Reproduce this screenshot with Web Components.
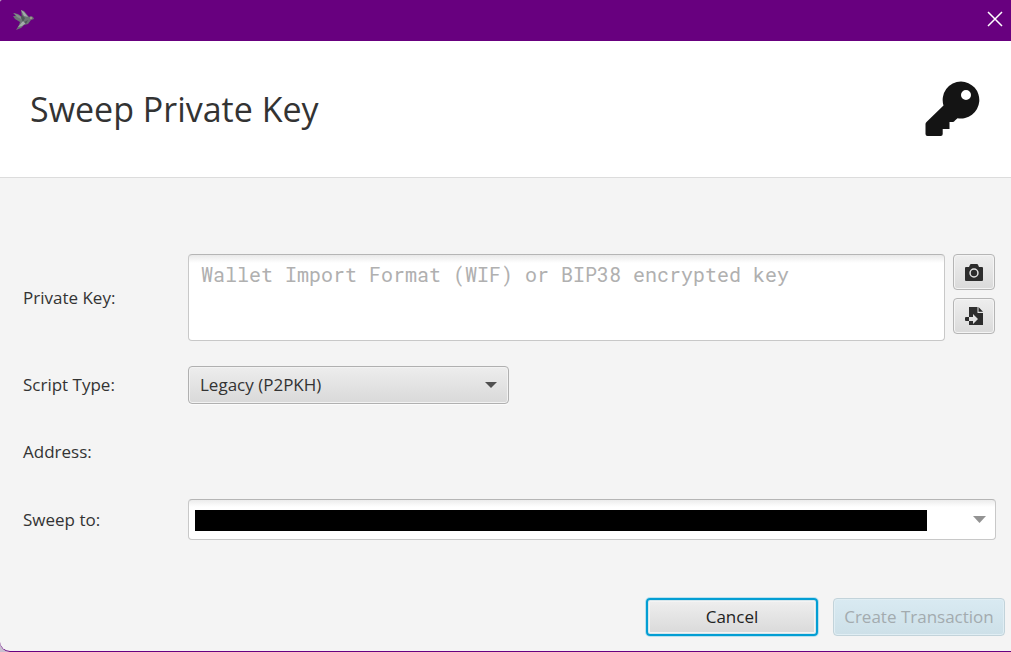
<!DOCTYPE html>
<html lang="en">
<head>
<meta charset="utf-8">
<title>Sweep Private Key</title>
<style>
  body {
    margin: 0;
    background: #c9bfd0;
    font-family: "Segoe UI", "Open Sans", "Noto Sans", sans-serif;
    font-size: 17px;
    line-height: 24px;
    color: #333;
  }
</style>
</head>
<body>
<sweep-dialog></sweep-dialog>

<script>
class TitleBar extends HTMLElement {
  constructor() {
    super();
    this.attachShadow({ mode: "open" });
    this.shadowRoot.innerHTML = `
      <style>
        :host {
          display: flex;
          align-items: center;
          justify-content: space-between;
          height: 41px;
          padding: 0 8px 4px 12px;
          box-sizing: border-box;
          background: #68007f;
        }
        svg { display: block; }
        button {
          padding: 0;
          border: 0;
          background: none;
          color: #fff;
        }
      </style>
      <svg width="22" height="22" viewBox="0 0 22 22" aria-hidden="true">
        <path fill="#6d7476" d="M1 5l5 1 4 3-1-7 3 1 5 6 2-1 2 1 1 2-3 1-3 4-4 1-3 3-5 2 3-5 1-3-5-3-2-3 3 0z"/>
        <path fill="#a3aaab" d="M9 2l3 2 4 5-4-1zM6 19l5-6 3 2-4 3z"/>
        <path fill="#858e8e" d="M2 5l6 3 3 4-6-3z"/>
        <path fill="#4e5858" d="M10 7l3 3-2 4-2-4zM12 14l4-2-2 4z"/>
        <circle cx="19" cy="10" r="1" fill="#b09b93"/>
      </svg>
      <button type="button" aria-label="Close">
        <svg width="16" height="16" viewBox="0 0 16 16" fill="none" stroke="currentColor" stroke-width="1.5">
          <path d="M1 1l14 14M15 1L1 15"/>
        </svg>
      </button>
    `;
  }
}

class DialogHeader extends HTMLElement {
  constructor() {
    super();
    this.attachShadow({ mode: "open" });
    this.shadowRoot.innerHTML = `
      <style>
        :host {
          display: flex;
          align-items: center;
          justify-content: space-between;
          height: 136px;
          padding: 0 30px;
          background: #fff;
          border-bottom: 1px solid #dcdcdc;
        }
        h1 {
          margin: 0;
          font-size: 34px;
          line-height: 48px;
          font-weight: 400;
        }
      </style>
      <h1><slot></slot></h1>
      <slot name="icon"></slot>
    `;
  }
}

class FormRow extends HTMLElement {
  constructor() {
    super();
    this.attachShadow({ mode: "open" });
    this.shadowRoot.innerHTML = `
      <style>
        :host {
          display: grid;
          grid-template-columns: 165px 1fr;
          align-items: center;
        }
        .content {
          display: flex;
          align-items: flex-start;
          gap: 8px;
          min-width: 0;
        }
      </style>
      <slot name="label"></slot>
      <div class="content"><slot></slot></div>
    `;
  }
}

class IconButton extends HTMLElement {
  constructor() {
    super();
    this.attachShadow({ mode: "open" });
    this.shadowRoot.innerHTML = `
      <style>
        :host { display: block; }
        button {
          display: flex;
          align-items: center;
          justify-content: center;
          width: 42px;
          height: 36px;
          padding: 0;
          border: 1px solid #b5b5b5;
          border-radius: 4px;
          background: linear-gradient(#eee, #dadada);
          box-shadow: inset 0 0 0 1px #f4f4f4;
          color: #2d2d2d;
        }
      </style>
      <button type="button" aria-label="${this.getAttribute("label") || ""}"><slot></slot></button>
    `;
  }
}

class DialogButton extends HTMLElement {
  constructor() {
    super();
    this.attachShadow({ mode: "open" });
    this.shadowRoot.innerHTML = `
      <style>
        :host { display: block; }
        button {
          width: 172px;
          height: 38px;
          padding: 0;
          border: 1px solid #b5b5b5;
          border-radius: 4px;
          background: linear-gradient(#efefef, #d9d9d9);
          font: inherit;
          color: #222;
          white-space: nowrap;
        }
        :host([focused]) button {
          border: 2px solid #039ed3;
          box-shadow: 0 0 0 1px #b9e1ef, inset 0 0 0 1px #d5e6ec, inset 0 0 0 2px #f4f4f4;
        }
        button:disabled {
          border-color: #c2d3da;
          background: linear-gradient(#d9eaf2, #cde0e8);
          box-shadow: inset 0 0 0 1px #e0eef4;
          color: #a3abaf;
        }
      </style>
      <button type="button" ${this.hasAttribute("disabled") ? "disabled" : ""}><slot></slot></button>
    `;
  }
}

class SweepForm extends HTMLElement {
  constructor() {
    super();
    this.attachShadow({ mode: "open" });
    this.shadowRoot.innerHTML = `
      <style>
        :host {
          display: flex;
          flex-direction: column;
          gap: 25px;
          padding: 76px 15px 0 23px;
        }
        textarea, select {
          box-sizing: border-box;
          margin: 0;
          border: 1px solid #b9b9b9;
          border-radius: 4px;
          color: #333;
        }
        textarea {
          flex: 1;
          min-width: 0;
          height: 87px;
          padding: 7px 12px;
          resize: none;
          border-color: #b5b5b5 #c8c8c8 #c8c8c8;
          background: linear-gradient(#e9e9e9, #fff 8px);
          font-family: "Roboto Mono", "Liberation Mono", monospace;
          font-size: 20px;
          line-height: 24px;
        }
        textarea::placeholder { color: #b0b0b0; opacity: 1; }
        select {
          appearance: none;
          font: inherit;
          background-repeat: no-repeat;
        }
        .tools {
          display: flex;
          flex-direction: column;
          gap: 8px;
          padding-right: 1px;
        }
        #script-type {
          width: 321px;
          height: 38px;
          padding: 0 40px 0 11px;
          border-color: #b0b0b0;
          background-image:
            url('data:image/svg+xml,<svg xmlns="http://www.w3.org/2000/svg" width="12" height="6"><path fill="%23505050" d="M0 0h12L6 6z"/></svg>'),
            linear-gradient(#ededed, #d9d9d9);
          background-position: right 11px center, 0 0;
          box-shadow: inset 0 0 0 1px #f2f2f2, 0 1px 0 #fbfbfb;
        }
        /* the chosen wallet is masked by a solid bar */
        #sweep-to {
          width: 100%;
          height: 41px;
          border-color: #b5b5b5 #c8c8c8 #c8c8c8;
          background-image:
            linear-gradient(#000, #000),
            url('data:image/svg+xml,<svg xmlns="http://www.w3.org/2000/svg" width="13" height="7"><path fill="%23939393" d="M0 0h13L6.5 7z"/></svg>'),
            linear-gradient(#ececec, #fff 7px);
          background-size: calc(100% - 74px) 21px, auto, auto;
          background-position: 6px 10px, right 9px center, 0 0;
        }
        .address { min-height: 45px; }
      </style>
      <form-row>
        <label slot="label" for="private-key">Private Key:</label>
        <textarea id="private-key" placeholder="Wallet Import Format (WIF) or BIP38 encrypted key"></textarea>
        <div class="tools">
          <icon-button label="Scan QR code">
            <svg width="20" height="20" viewBox="0 0 20 20">
              <path fill="currentColor" fill-rule="evenodd" d="M2 5h3l1-2.200Q6.300 2 7 2h6q.7 0 1 .8L15 5h3q1 0 1 1v12q0 1-1 1H2q-1 0-1-1V6q0-1 1-1zM10 6.300a4.700 4.700 0 1 0 0 9.400a4.700 4.700 0 1 0 0-9.400zM10 7.800a3.200 3.200 0 1 1 0 6.400a3.200 3.200 0 1 1 0-6.400z"/>
            </svg>
          </icon-button>
          <icon-button label="Import from file">
            <svg width="20" height="20" viewBox="0 0 20 20">
              <path fill="currentColor" d="M5 1h8.500v6H19v12H5v-4h4v3l5-5-5-5v3H5zM14.500 1L19 5.800h-4.500zM2 11h3v4H2q-1 0-1-1v-2q0-1 1-1z"/>
            </svg>
          </icon-button>
        </div>
      </form-row>
      <form-row>
        <label slot="label" for="script-type">Script Type:</label>
        <select id="script-type"><option>Legacy (P2PKH)</option></select>
      </form-row>
      <form-row class="address">
        <label slot="label" for="address">Address:</label>
        <output id="address"></output>
      </form-row>
      <form-row>
        <label slot="label" for="sweep-to">Sweep to:</label>
        <select id="sweep-to"><option></option></select>
      </form-row>
    `;
  }
}

class SweepDialog extends HTMLElement {
  constructor() {
    super();
    this.attachShadow({ mode: "open" });
    this.shadowRoot.innerHTML = `
      <style>
        :host {
          display: flex;
          flex-direction: column;
          min-height: 100vh;
          box-sizing: border-box;
          overflow: hidden;
          background: #f4f4f4;
          border-bottom: 1px solid #68007f;
          border-radius: 2px 0 0 10px;
        }
        footer {
          display: flex;
          justify-content: flex-end;
          gap: 15px;
          margin-top: auto;
          padding: 15px 6px;
        }
      </style>
      <title-bar></title-bar>
      <dialog-header>
        Sweep Private Key
        <svg slot="icon" width="56" height="56" viewBox="0 0 56 56" aria-hidden="true">
          <path fill="#141414" fill-rule="evenodd" d="M36 .5a18.500 18.500 0 1 1-3.500 36.700L30 39.500Q29 41 27.500 41h-3v7H17.700v5q0 2-2 2H2.500Q.5 55 .5 53V43q0-1 1-2l17-16.500A18.500 18.500 0 0 1 36 .5zM41 9a5 5 0 1 0 0 10a5 5 0 1 0 0-10z"/>
        </svg>
      </dialog-header>
      <sweep-form></sweep-form>
      <footer>
        <dialog-button focused>Cancel</dialog-button>
        <dialog-button disabled>Create Transaction</dialog-button>
      </footer>
    `;
  }
}

customElements.define("title-bar", TitleBar);
customElements.define("dialog-header", DialogHeader);
customElements.define("form-row", FormRow);
customElements.define("icon-button", IconButton);
customElements.define("dialog-button", DialogButton);
customElements.define("sweep-form", SweepForm);
customElements.define("sweep-dialog", SweepDialog);
</script>
</body>
</html>
